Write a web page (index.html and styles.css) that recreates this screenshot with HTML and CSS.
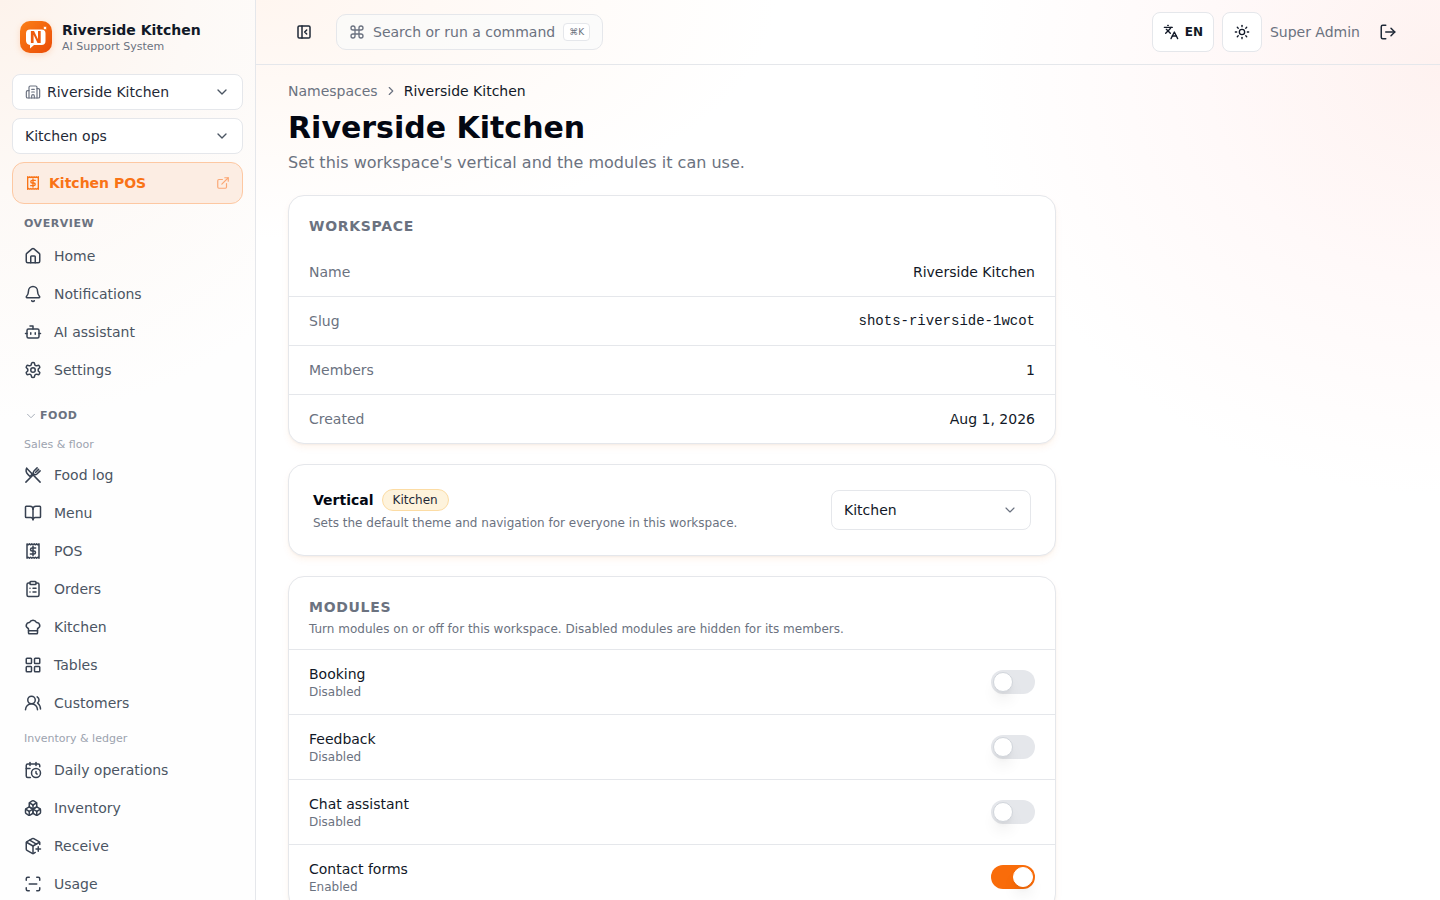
FILE: index.html
```html
<!DOCTYPE html>
<html lang="en">
<head>
    <meta charset="UTF-8">
    <title>Riverside Kitchen</title>
    <meta name="viewport" content="width=device-width, initial-scale=1.0">
    <link rel="stylesheet" href="styles.css">
</head>
<body>
    <svg class="sprite" xmlns="http://www.w3.org/2000/svg">
        <symbol id="i-chevron" viewBox="0 0 24 24"><path d="m6 9 6 6 6-6"/></symbol>
        <symbol id="i-building" viewBox="0 0 24 24"><path d="M10 12h4"/><path d="M10 8h4"/><path d="M14 21v-3a2 2 0 0 0-4 0v3"/><path d="M6 10H4a2 2 0 0 0-2 2v7a2 2 0 0 0 2 2h16a2 2 0 0 0 2-2V9a2 2 0 0 0-2-2h-2"/><path d="M6 21V5a2 2 0 0 1 2-2h8a2 2 0 0 1 2 2v16"/></symbol>
        <symbol id="i-receipt" viewBox="0 0 24 24"><path d="M4 2.500l1.600 1.200 1.600-1.200 1.600 1.200 1.600-1.200L12 3.700l1.600-1.200 1.600 1.200 1.600-1.200 1.600 1.200L20 2.500v19l-1.600-1.200-1.600 1.200-1.600-1.200-1.600 1.200-1.600-1.200-1.600 1.200-1.600-1.200-1.600 1.200-1.600-1.200L4 21.500z"/><path d="M15.500 8h-4.800a2 2 0 0 0 0 4h2.600a2 2 0 0 1 0 4H8.500"/><path d="M12 6v12"/></symbol>
        <symbol id="i-external" viewBox="0 0 24 24"><path d="M15 3h6v6"/><path d="M10 14 21 3"/><path d="M18 13v6a2 2 0 0 1-2 2H5a2 2 0 0 1-2-2V8a2 2 0 0 1 2-2h6"/></symbol>
        <symbol id="i-home" viewBox="0 0 24 24"><path d="M15 21v-8a1 1 0 0 0-1-1h-4a1 1 0 0 0-1 1v8"/><path d="M3 10a2 2 0 0 1 .709-1.528l7-5.999a2 2 0 0 1 2.582 0l7 5.999A2 2 0 0 1 21 10v9a2 2 0 0 1-2 2H5a2 2 0 0 1-2-2z"/></symbol>
        <symbol id="i-bell" viewBox="0 0 24 24"><path d="M10.268 21a2 2 0 0 0 3.464 0"/><path d="M3.262 15.326A1 1 0 0 0 4 17h16a1 1 0 0 0 .74-1.673C19.41 13.956 18 12.499 18 8A6 6 0 0 0 6 8c0 4.499-1.411 5.956-2.738 7.326"/></symbol>
        <symbol id="i-bot" viewBox="0 0 24 24"><path d="M12 8V4H8"/><rect width="16" height="12" x="4" y="8" rx="2"/><path d="M2 14h2"/><path d="M20 14h2"/><path d="M15 13v2"/><path d="M9 13v2"/></symbol>
        <symbol id="i-settings" viewBox="0 0 24 24"><path d="M12.22 2h-.44a2 2 0 0 0-2 2v.18a2 2 0 0 1-1 1.73l-.43.25a2 2 0 0 1-2 0l-.15-.08a2 2 0 0 0-2.73.73l-.22.38a2 2 0 0 0 .73 2.73l.15.1a2 2 0 0 1 1 1.72v.51a2 2 0 0 1-1 1.74l-.15.09a2 2 0 0 0-.73 2.73l.22.38a2 2 0 0 0 2.73.73l.15-.08a2 2 0 0 1 2 0l.43.25a2 2 0 0 1 1 1.73V20a2 2 0 0 0 2 2h.44a2 2 0 0 0 2-2v-.18a2 2 0 0 1 1-1.73l.43-.25a2 2 0 0 1 2 0l.15.08a2 2 0 0 0 2.73-.73l.22-.39a2 2 0 0 0-.73-2.73l-.15-.08a2 2 0 0 1-1-1.74v-.5a2 2 0 0 1 1-1.74l.15-.09a2 2 0 0 0 .73-2.73l-.22-.38a2 2 0 0 0-2.73-.73l-.15.08a2 2 0 0 1-2 0l-.43-.25a2 2 0 0 1-1-1.73V4a2 2 0 0 0-2-2z"/><circle cx="12" cy="12" r="3"/></symbol>
        <symbol id="i-utensils" viewBox="0 0 24 24"><path d="M2.500 21.500 13 11"/><path d="M13 11c-1.200-1.500-.8-3 .3-4.200L17.500 2.500"/><path d="M13 11c1.500 1.200 3 .8 4.200-.3L21.500 6.500"/><path d="M15.300 8.700 19.500 4.500"/><path d="M21.500 21.500 3.500 3"/><path d="M3.500 3C2 6 3 9 5.500 11.500L8 14l2.500-2.500"/></symbol>
        <symbol id="i-book" viewBox="0 0 24 24"><path d="M12 7v14"/><path d="M3 18a1 1 0 0 1-1-1V4a1 1 0 0 1 1-1h5a4 4 0 0 1 4 4 4 4 0 0 1 4-4h5a1 1 0 0 1 1 1v13a1 1 0 0 1-1 1h-6a3 3 0 0 0-3 3 3 3 0 0 0-3-3z"/></symbol>
        <symbol id="i-clipboard" viewBox="0 0 24 24"><rect width="8" height="4" x="8" y="2" rx="1"/><path d="M16 4h2a2 2 0 0 1 2 2v14a2 2 0 0 1-2 2H6a2 2 0 0 1-2-2V6a2 2 0 0 1 2-2h2"/><path d="M12 11h4"/><path d="M12 16h4"/><path d="M8 11h.01"/><path d="M8 16h.01"/></symbol>
        <symbol id="i-chef" viewBox="0 0 24 24"><path d="M17 21a1 1 0 0 0 1-1v-5.35c0-.457.316-.844.727-1.041a4 4 0 0 0-2.134-7.589 5 5 0 0 0-9.186 0 4 4 0 0 0-2.134 7.588c.411.198.727.585.727 1.041V20a1 1 0 0 0 1 1Z"/><path d="M6 17h12"/></symbol>
        <symbol id="i-grid" viewBox="0 0 24 24"><rect width="7" height="7" x="3" y="3" rx="1"/><rect width="7" height="7" x="14" y="3" rx="1"/><rect width="7" height="7" x="14" y="14" rx="1"/><rect width="7" height="7" x="3" y="14" rx="1"/></symbol>
        <symbol id="i-users" viewBox="0 0 24 24"><path d="M18 21a8 8 0 0 0-16 0"/><circle cx="10" cy="8" r="5"/><path d="M22 20c0-3.37-2-6.5-4-8a5 5 0 0 0-.45-8.3"/></symbol>
        <symbol id="i-calendar" viewBox="0 0 24 24"><path d="M21 7.5V6a2 2 0 0 0-2-2H5a2 2 0 0 0-2 2v14a2 2 0 0 0 2 2h3.5"/><path d="M16 2v4"/><path d="M8 2v4"/><path d="M3 10h5"/><path d="M17.5 17.5 16 16.3V14"/><circle cx="16" cy="16" r="6"/></symbol>
        <symbol id="i-boxes" viewBox="0 0 24 24"><path d="M2.97 12.92A2 2 0 0 0 2 14.63v3.24a2 2 0 0 0 .97 1.71l3 1.8a2 2 0 0 0 2.06 0L12 19v-5.5l-5-3-4.03 2.42Z"/><path d="m7 16.5-4.74-2.85"/><path d="m7 16.5 5-3"/><path d="M7 16.5v5.17"/><path d="M12 13.5V19l3.97 2.38a2 2 0 0 0 2.06 0l3-1.8a2 2 0 0 0 .97-1.71v-3.24a2 2 0 0 0-.97-1.71L17 10.5l-5 3Z"/><path d="m17 16.5-5-3"/><path d="m17 16.5 4.74-2.85"/><path d="M17 16.5v5.17"/><path d="M7.97 4.42A2 2 0 0 0 7 6.13v4.37l5 3 5-3V6.13a2 2 0 0 0-.97-1.71l-3-1.8a2 2 0 0 0-2.06 0l-3 1.8Z"/><path d="M12 8 7.26 5.15"/><path d="m12 8 4.74-2.85"/><path d="M12 13.5V8"/></symbol>
        <symbol id="i-package" viewBox="0 0 24 24"><path d="M16 16h6"/><path d="M19 13v6"/><path d="M21 10V8a2 2 0 0 0-1-1.73l-7-4a2 2 0 0 0-2 0l-7 4A2 2 0 0 0 3 8v8a2 2 0 0 0 1 1.73l7 4a2 2 0 0 0 2 0l2-1.14"/><path d="m7.5 4.27 9 5.15"/><path d="M3.29 7 12 12l8.71-5"/><path d="M12 22V12"/></symbol>
        <symbol id="i-scan" viewBox="0 0 24 24"><path d="M3 7V5a2 2 0 0 1 2-2h2"/><path d="M17 3h2a2 2 0 0 1 2 2v2"/><path d="M21 17v2a2 2 0 0 1-2 2h-2"/><path d="M7 21H5a2 2 0 0 1-2-2v-2"/><path d="M7 12h10"/></symbol>
        <symbol id="i-panel" viewBox="0 0 24 24"><rect width="18" height="18" x="3" y="3" rx="2"/><path d="M9 3v18"/><path d="m16 15-3-3 3-3"/></symbol>
        <symbol id="i-command" viewBox="0 0 24 24"><path d="M15 6v12a3 3 0 1 0 3-3H6a3 3 0 1 0 3 3V6a3 3 0 1 0-3 3h12a3 3 0 1 0-3-3"/></symbol>
        <symbol id="i-lang" viewBox="0 0 24 24"><path d="m5 8 6 6"/><path d="m4 14 6-6 2-3"/><path d="M2 5h12"/><path d="M7 2h1"/><path d="m22 22-5-10-5 10"/><path d="M14 18h6"/></symbol>
        <symbol id="i-sun" viewBox="0 0 24 24"><circle cx="12" cy="12" r="4"/><path d="M12 2v2"/><path d="M12 20v2"/><path d="m4.93 4.93 1.41 1.41"/><path d="m17.66 17.66 1.41 1.41"/><path d="M2 12h2"/><path d="M20 12h2"/><path d="m6.34 17.66-1.41 1.41"/><path d="m19.07 4.93-1.41 1.41"/></symbol>
        <symbol id="i-logout" viewBox="0 0 24 24"><path d="m16 17 5-5-5-5"/><path d="M21 12H9"/><path d="M9 21H5a2 2 0 0 1-2-2V5a2 2 0 0 1 2-2h4"/></symbol>
    </svg>

    <div class="app">
        <aside class="sidebar">
            <div class="brand">
                <svg class="brand-logo" viewBox="0 0 32 32">
                    <defs>
                        <linearGradient id="logo-fill" x1="0" y1="0" x2="1" y2="1">
                            <stop offset="0" stop-color="#fb7f16"/>
                            <stop offset="1" stop-color="#ea4c08"/>
                        </linearGradient>
                    </defs>
                    <rect width="32" height="32" rx="10" fill="url(#logo-fill)"/>
                    <path d="M10 8.500h11.500a4 4 0 0 1 4 4V20a4 4 0 0 1-4 4H14l-4 3.500V24a4.500 4.500 0 0 1-4-4v-7.500a4 4 0 0 1 4-4z" fill="#fff"/>
                    <text x="15.800" y="21.500" text-anchor="middle" class="brand-n">N</text>
                    <circle cx="25" cy="7" r="1.900" fill="#fff" stroke="#f36a10"/>
                </svg>
                <div>
                    <div class="brand-name">Riverside Kitchen</div>
                    <div class="brand-sub">AI Support System</div>
                </div>
            </div>

            <button class="picker" type="button">
                <svg class="icon picker-icon"><use href="#i-building"/></svg>
                <span>Riverside Kitchen</span>
                <svg class="icon caret"><use href="#i-chevron"/></svg>
            </button>
            <button class="picker" type="button">
                <span>Kitchen ops</span>
                <svg class="icon caret"><use href="#i-chevron"/></svg>
            </button>
            <a class="pos-link">
                <svg class="icon"><use href="#i-receipt"/></svg>
                <span>Kitchen POS</span>
                <svg class="icon ext"><use href="#i-external"/></svg>
            </a>

            <div class="nav-title">OVERVIEW</div>
            <a class="nav-item"><svg class="icon"><use href="#i-home"/></svg>Home</a>
            <a class="nav-item"><svg class="icon"><use href="#i-bell"/></svg>Notifications</a>
            <a class="nav-item"><svg class="icon"><use href="#i-bot"/></svg>AI assistant</a>
            <a class="nav-item"><svg class="icon"><use href="#i-settings"/></svg>Settings</a>

            <div class="nav-group"><svg class="icon"><use href="#i-chevron"/></svg>FOOD</div>
            <div class="nav-sub">Sales &amp; floor</div>
            <a class="nav-item"><svg class="icon"><use href="#i-utensils"/></svg>Food log</a>
            <a class="nav-item"><svg class="icon"><use href="#i-book"/></svg>Menu</a>
            <a class="nav-item"><svg class="icon"><use href="#i-receipt"/></svg>POS</a>
            <a class="nav-item"><svg class="icon"><use href="#i-clipboard"/></svg>Orders</a>
            <a class="nav-item"><svg class="icon"><use href="#i-chef"/></svg>Kitchen</a>
            <a class="nav-item"><svg class="icon"><use href="#i-grid"/></svg>Tables</a>
            <a class="nav-item"><svg class="icon"><use href="#i-users"/></svg>Customers</a>
            <div class="nav-sub nav-sub-next">Inventory &amp; ledger</div>
            <a class="nav-item"><svg class="icon"><use href="#i-calendar"/></svg>Daily operations</a>
            <a class="nav-item"><svg class="icon"><use href="#i-boxes"/></svg>Inventory</a>
            <a class="nav-item"><svg class="icon"><use href="#i-package"/></svg>Receive</a>
            <a class="nav-item"><svg class="icon"><use href="#i-scan"/></svg>Usage</a>
        </aside>

        <div class="main">
            <header class="topbar">
                <button class="collapse-btn" type="button"><svg class="icon"><use href="#i-panel"/></svg></button>
                <div class="search">
                    <svg class="icon"><use href="#i-command"/></svg>
                    <span>Search or run a command</span>
                    <kbd>⌘K</kbd>
                </div>
                <div class="topbar-right">
                    <button class="top-btn lang-btn" type="button"><svg class="icon"><use href="#i-lang"/></svg>EN</button>
                    <button class="top-btn" type="button"><svg class="icon"><use href="#i-sun"/></svg></button>
                    <span class="user-name">Super Admin</span>
                    <button class="logout-btn" type="button"><svg class="icon"><use href="#i-logout"/></svg></button>
                </div>
            </header>

            <main class="content">
                <nav class="crumbs">
                    <span class="crumb-parent">Namespaces</span>
                    <svg class="icon"><use href="#i-chevron"/></svg>
                    <span>Riverside Kitchen</span>
                </nav>
                <h1>Riverside Kitchen</h1>
                <p class="lead">Set this workspace's vertical and the modules it can use.</p>

                <section class="card">
                    <h2 class="card-title">WORKSPACE</h2>
                    <div class="info-row"><span>Name</span><b>Riverside Kitchen</b></div>
                    <div class="info-row"><span>Slug</span><code>shots-riverside-1wcot</code></div>
                    <div class="info-row"><span>Members</span><b>1</b></div>
                    <div class="info-row"><span>Created</span><b>Aug 1, 2026</b></div>
                </section>

                <section class="card vertical-card">
                    <div>
                        <div class="vertical-head"><strong>Vertical</strong><span class="tag">Kitchen</span></div>
                        <p class="vertical-desc">Sets the default theme and navigation for everyone in this workspace.</p>
                    </div>
                    <div class="select-box">
                        <span>Kitchen</span>
                        <svg class="icon"><use href="#i-chevron"/></svg>
                    </div>
                </section>

                <section class="card">
                    <div class="modules-head">
                        <h2 class="card-title">MODULES</h2>
                        <p>Turn modules on or off for this workspace. Disabled modules are hidden for its members.</p>
                    </div>
                    <div class="module-row">
                        <div><div class="module-name">Booking</div><div class="module-state">Disabled</div></div>
                        <span class="toggle"></span>
                    </div>
                    <div class="module-row">
                        <div><div class="module-name">Feedback</div><div class="module-state">Disabled</div></div>
                        <span class="toggle"></span>
                    </div>
                    <div class="module-row">
                        <div><div class="module-name">Chat assistant</div><div class="module-state">Disabled</div></div>
                        <span class="toggle"></span>
                    </div>
                    <div class="module-row">
                        <div><div class="module-name">Contact forms</div><div class="module-state">Enabled</div></div>
                        <span class="toggle on"></span>
                    </div>
                </section>
            </main>
        </div>
    </div>
</body>
</html>
```

FILE: styles.css
```css
*, *::after { box-sizing: border-box; }
html, body {
    margin: 0; padding: 0; height: 100%; overflow: hidden; background: #fff; color: #111827;
    font-family: "DejaVu Sans", sans-serif;
}
.sprite { display: none; }
.icon {
    width: 18px; height: 18px; flex: none; fill: none; stroke: currentColor;
    stroke-width: 2; stroke-linecap: round; stroke-linejoin: round;
}
button { font-family: inherit; background: none; border: none; padding: 0; color: inherit; }
.app { display: flex; height: 100vh; }

/* sidebar */
.sidebar {
    width: 256px; flex: none; height: 100%; overflow: hidden; padding: 0 12px;
    border-right: 1px solid #e5e7eb;
    background: radial-gradient(420px 420px at 0 0, #fdf3ec 0, #fdf9f6 45%, #fefefe 100%);
}
.brand { display: flex; align-items: center; gap: 10px; height: 74px; padding: 0 8px; }
.brand-logo { width: 32px; height: 32px; flex: none; filter: drop-shadow(0 2px 3px #f9731633); }
.brand-n { font: bold 15px "DejaVu Sans", sans-serif; fill: #ee5a0c; }
.brand-name { font-size: 14px; font-weight: 700; line-height: 18px; }
.brand-sub { margin-top: 1px; font-size: 11px; line-height: 14px; color: #6b7280; }
.picker {
    display: flex; align-items: center; width: 100%; height: 36px; padding: 0 12px; margin-bottom: 8px;
    background: #fff; border: 1px solid #e5e7eb; border-radius: 8px;
    font-size: 14px; color: #1f2937; text-align: left;
}
.picker-icon { width: 16px; height: 16px; margin-right: 6px; color: #6b7280; stroke-width: 1.75; }
.caret { margin-left: auto; width: 16px; height: 16px; color: #4b5563; }
.pos-link {
    display: flex; align-items: center; gap: 8px; height: 42px; padding: 0 12px;
    background: #fcede3; border: 1px solid #fdc8a2; border-radius: 12px;
    font-size: 14px; font-weight: 700; color: #f97316;
}
.pos-link .icon { width: 16px; height: 16px; }
.pos-link .ext { margin-left: auto; width: 14px; height: 14px; color: #fba774; }
.nav-title { margin-top: 13px; padding: 0 12px; font-size: 11px; font-weight: 700; line-height: 14px; letter-spacing: 0.55px; color: #6b7280; }
.nav-item { display: flex; align-items: center; gap: 12px; height: 38px; padding: 0 12px; font-size: 14px; color: #4b5563; }
.nav-title + .nav-item { margin-top: 6px; }
.nav-item .icon { color: #374151; }
.nav-group {
    display: flex; align-items: center; gap: 2px; margin-top: 20px; padding: 0 12px;
    font-size: 11px; font-weight: 700; line-height: 14px; letter-spacing: 0.55px; color: #6b7280;
}
.nav-group .icon { width: 14px; height: 14px; color: #9ca3af; stroke-width: 1.5; }
.nav-sub { margin-top: 15px; margin-bottom: 4px; padding: 0 12px; font-size: 11px; line-height: 14px; color: #9ca3af; }
.nav-sub-next { margin-top: 10px; margin-bottom: 5px; }

/* top bar */
.main {
    flex: 1; min-width: 0; height: 100%; overflow: hidden;
    background:
        radial-gradient(470px 430px at 100% 65px, #fef2f0 0, #fff9f9 50%, #fff0 100%),
        radial-gradient(520px 240px at 0 0, #fff6f0 0, #fff0 100%),
        #fff;
}
.topbar { display: flex; align-items: center; height: 65px; padding: 0 41px 0 32px; border-bottom: 1px solid #e5e7eb; }
.collapse-btn { display: flex; justify-content: center; width: 32px; margin-right: 16px; color: #1f2937; }
.collapse-btn .icon { width: 16px; height: 16px; stroke-width: 2.25; }
.search {
    display: flex; align-items: center; gap: 8px; width: 267px; height: 36px; padding: 0 12px;
    background: #f9fafbb0; border: 1px solid #e5e7eb; border-radius: 10px;
    font-size: 14px; color: #6b7280; white-space: nowrap;
}
.search .icon { width: 16px; height: 16px; color: #6b7280; }
.search kbd {
    flex: none; width: 27px; height: 18px; margin-left: auto; line-height: 16px; text-align: center;
    background: #fff; border: 1px solid #e5e7eb; border-radius: 4px;
    font: 9px/16px "DejaVu Sans", sans-serif; color: #6b7280;
}
.topbar-right { display: flex; align-items: center; gap: 8px; margin-left: auto; }
.top-btn {
    display: flex; align-items: center; justify-content: center; gap: 6px; width: 40px; height: 40px;
    background: #fff; border: 1px solid #e5e7eb; border-radius: 8px;
    font-size: 12px; font-weight: 700; color: #111827;
}
.top-btn .icon { width: 16px; height: 16px; }
.lang-btn { width: 62px; }
.user-name { font-size: 14px; color: #6b7280; }
.logout-btn { display: flex; margin-left: 11px; margin-right: 2px; color: #1f2937; }

/* content */
.content { padding: 16px 32px; }
.crumbs { display: flex; align-items: center; gap: 6px; height: 20px; font-size: 14px; color: #111827; }
.crumb-parent { color: #6b7280; }
.crumbs .icon { width: 14px; height: 14px; color: #6b7280; transform: rotate(-90deg); }
h1 { margin: 8px 0 0; font-size: 30px; font-weight: 700; line-height: 38px; color: #030712; }
.lead { margin: 4px 0 0; font-size: 16px; line-height: 24px; color: #6b7280; }
.card {
    width: 768px; margin-top: 20px; background: #fff; border: 1px solid #e5e7eb; border-radius: 16px;
    box-shadow: 0 4px 8px -2px #f973161a, 0 1px 2px #0000000a;
}
.card-title { margin: 0; padding: 21px 20px 13px; font-size: 14px; font-weight: 700; line-height: 18px; letter-spacing: 0.7px; color: #6b7280; }
.info-row {
    display: flex; align-items: center; justify-content: space-between; height: 49px; padding: 0 20px;
    border-top: 1px solid #e5e7eb; font-size: 14px; color: #6b7280;
}
.card-title + .info-row { height: 48px; border-top: none; }
.info-row b { font-weight: 400; color: #111827; }
.info-row code { font: 14px "Liberation Mono", monospace; color: #111827; }
.vertical-card { display: flex; align-items: center; justify-content: space-between; padding: 24px; }
.vertical-head { display: flex; align-items: center; gap: 8px; height: 22px; }
.vertical-head strong { font-size: 14px; color: #030712; }
.tag {
    padding: 0 10px; height: 22px; line-height: 20px; border: 1px solid #fcdca4; border-radius: 11px;
    background: #fef3dc; font-size: 12px; color: #1f2937;
}
.vertical-desc { margin: 4px 0 0; font-size: 12px; line-height: 16px; color: #6b7280; }
.select-box {
    display: flex; align-items: center; justify-content: space-between; width: 200px; height: 40px; padding: 0 12px;
    background: #fff; border: 1px solid #e5e7eb; border-radius: 8px; font-size: 14px; color: #111827;
}
.select-box .icon { width: 16px; height: 16px; color: #6b7280; stroke-width: 1.75; }
.modules-head { height: 72px; }
.modules-head .card-title { padding: 21px 20px 5px; }
.modules-head p { margin: 0; padding: 0 20px; font-size: 12px; line-height: 16px; color: #6b7280; }
.module-row {
    display: flex; align-items: center; justify-content: space-between; height: 65px; padding: 0 20px;
    border-top: 1px solid #e5e7eb;
}
.module-name { font-size: 14px; line-height: 19px; color: #111827; }
.module-state { font-size: 12px; line-height: 16px; color: #6b7280; }
.toggle { position: relative; width: 44px; height: 24px; border-radius: 12px; background: #e5e7eb; }
.toggle::after {
    content: ""; position: absolute; top: 2px; left: 2px; width: 20px; height: 20px; border-radius: 50%;
    background: #fff; border: 1px solid #d1d5db; box-shadow: 0 10px 15px -3px #0000001a, 0 4px 6px -4px #0000001a;
}
.toggle.on { background: #f96c0a; }
.toggle.on::after { left: 22px; border-color: #fff; }
```
